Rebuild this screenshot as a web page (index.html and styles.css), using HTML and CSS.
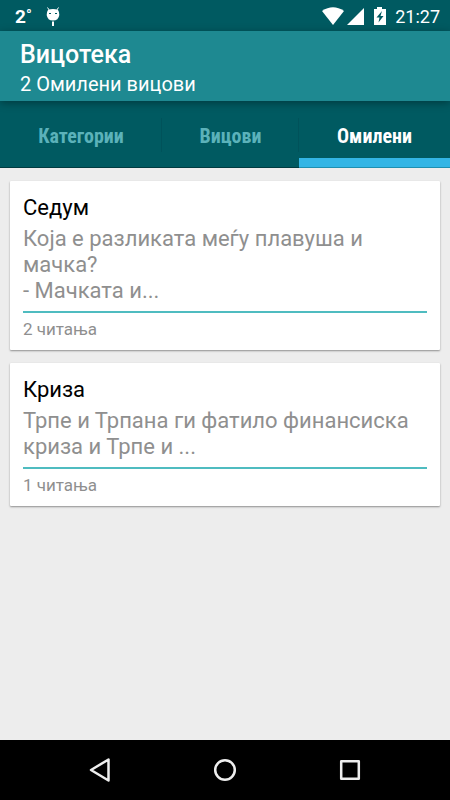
FILE: index.html
```html
<!DOCTYPE html>
<html lang="mk">
<head>
<meta charset="utf-8">
<meta name="viewport" content="width=device-width, initial-scale=1">
<title>Вицотека</title>
<link rel="stylesheet" href="styles.css">
</head>
<body>
<div class="status">
  <span class="temp">2<span class="degree">°</span></span>
  <svg class="android" width="14" height="20" viewBox="0 0 14 20" aria-hidden="true">
    <path d="M1.500 .5 3.500 3.500M12.500 .5 10.500 3.500" stroke="#fff" stroke-width="1" fill="none"/>
    <path d="M2 3 Q7 .8 12 3 Q13.500 5 13.300 8 Q12.600 13.500 7 13.500 Q1.400 13.500 .7 8 Q.5 5 2 3Z" fill="#fff"/>
    <path d="M3 6.500h2M9 6.500h2" stroke="#005a61" stroke-width="1.200"/>
    <path d="M7 14.500V19" stroke="#fff" stroke-width="2"/>
  </svg>
  <svg class="signals" width="66" height="20" viewBox="0 0 66 20" aria-hidden="true">
    <path d="M0 4 Q11 -3.500 22 4 L11 18Z" fill="#fff"/>
    <path d="M42 1V18H25Z" fill="#fff"/>
    <path d="M52 2h3V0h5v2h4v16H52Z" fill="#fff"/>
    <path d="M60 4 54.500 10.500H57.500L56.500 15.500 61.500 9H58.500Z" fill="#005a61"/>
  </svg>
  <time class="clock">21:27</time>
</div>
<header class="toolbar">
  <h1>Вицотека</h1>
  <p>2 Омилени вицови</p>
</header>
<nav class="tabs">
  <button class="tab" type="button">Категории</button>
  <button class="tab" type="button">Вицови</button>
  <button class="tab active" type="button" aria-current="page">Омилени</button>
</nav>
<main class="list">
  <article class="card">
    <h2>Седум</h2>
    <p class="excerpt">Која е разликата меѓу плавуша и мачка?<br>- Мачката и...</p>
    <p class="reads">2 читања</p>
  </article>
  <article class="card">
    <h2>Криза</h2>
    <p class="excerpt">Трпе и Трпана ги фатило финансиска криза и Трпе и ...</p>
    <p class="reads">1 читања</p>
  </article>
</main>
<footer class="navbar">
  <button type="button" aria-label="Назад"><svg width="26" height="26" viewBox="0 0 26 26" stroke-width="2.500"><path d="M21.500 2.500V23.500L4 13Z"/></svg></button>
  <button type="button" aria-label="Почетна"><svg width="26" height="26" viewBox="0 0 26 26" stroke-width="2.500"><circle cx="13" cy="13" r="9.800"/></svg></button>
  <button type="button" aria-label="Скорешни"><svg width="26" height="26" viewBox="0 0 26 26" stroke-width="2.500"><path d="M4.200 4.200H21.800V21.800H4.200Z"/></svg></button>
</footer>
</body>
</html>
```
FILE: styles.css
```css
* {
  box-sizing: border-box;
}

body {
  margin: 0;
  min-height: 100vh;
  display: flex;
  flex-direction: column;
  background: #ededed;
  font-family: Roboto, sans-serif;
}

h1,
h2,
p {
  margin: 0;
  font-weight: 400;
}

button {
  border: 0;
  padding: 0;
  background: none;
  font: inherit;
}

.status {
  display: flex;
  align-items: center;
  height: 31px;
  padding: 2px 10px 0 15px;
  background: #005a61;
  color: #fff;
}

.temp {
  width: 31px;
  font-size: 19px;
  line-height: 20px;
  font-weight: 700;
}

.degree {
  font-size: 15px;
  line-height: 1;
  vertical-align: 3px;
}

.signals {
  margin-left: auto;
}

.clock {
  margin-left: 7px;
  font-size: 18px;
}

.toolbar {
  position: relative;
  padding: 8px 20px 4px;
  background: #1e8991;
  color: #fff;
  box-shadow: 0 2px 8px rgba(0, 0, 0, 0.35);
}

.toolbar h1 {
  font-size: 25px;
  line-height: 32px;
  font-weight: 500;
}

.toolbar p {
  font-size: 20px;
  line-height: 26px;
}

.tabs {
  display: grid;
  grid-template-columns: 162fr 137fr 151fr;
  height: 67px;
  background: #005a61;
}

.tab {
  display: grid;
  place-items: center;
  padding-top: 3px;
  color: #5bb2ba;
  font-family: "Roboto Condensed", Roboto, sans-serif;
  font-size: 20px;
  font-weight: 700;
  background: linear-gradient(#00525a, #00525a) right center / 1px 34px no-repeat;
  box-shadow: inset 0 -1px #003b40;
}

.tab.active {
  background: linear-gradient(#33b5e5, #33b5e5) bottom / 100% 10px no-repeat;
  box-shadow: inset 0 -1px #1e8fb0;
  color: #fff;
}

.list {
  flex: 1;
  display: flex;
  flex-direction: column;
  gap: 13px;
  padding: 13px 10px;
}

.card {
  padding: 13px 13px 10px;
  background: #fff;
  border-radius: 1px;
  box-shadow: 0 1px 2px rgba(0, 0, 0, 0.4);
}

.card h2 {
  font-size: 22px;
  line-height: 28px;
  color: #000;
}

.excerpt {
  padding: 4px 0 7px;
  font-size: 22px;
  line-height: 26px;
  color: #8f8f8f;
}

.reads {
  padding-top: 6px;
  border-top: 2px solid #4fbcc0;
  font-size: 17px;
  line-height: 21px;
  color: #8f8f8f;
}

.navbar {
  display: flex;
  justify-content: center;
  gap: 65px;
  height: 60px;
  background: #000;
}

.navbar button {
  display: grid;
  place-items: center;
  width: 60px;
}

.navbar svg {
  fill: none;
  stroke: #eee;
  stroke-linejoin: round;
}
```
